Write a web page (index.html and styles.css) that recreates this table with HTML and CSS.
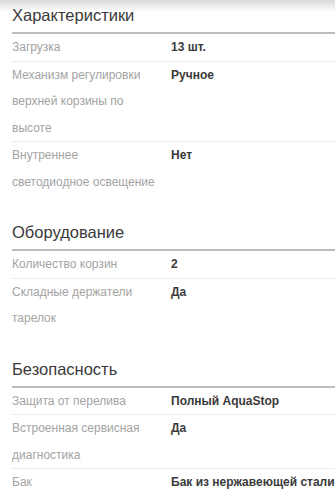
FILE: index.html
```html
<!DOCTYPE html>
<html lang="ru">
<head>
<meta charset="utf-8">
<link rel="stylesheet" href="styles.css">
</head>
<body>
<div class="specs">
  <section class="group">
    <h2 class="group-title">Характеристики</h2>
    <div class="row"><div class="label">Загрузка</div><div class="value">13 шт.</div></div>
    <div class="row"><div class="label">Механизм регулировки верхней корзины по высоте</div><div class="value">Ручное</div></div>
    <div class="row last"><div class="label">Внутреннее светодиодное освещение</div><div class="value">Нет</div></div>
  </section>
  <section class="group">
    <h2 class="group-title">Оборудование</h2>
    <div class="row"><div class="label">Количество корзин</div><div class="value">2</div></div>
    <div class="row last"><div class="label">Складные держатели тарелок</div><div class="value">Да</div></div>
  </section>
  <section class="group">
    <h2 class="group-title">Безопасность</h2>
    <div class="row"><div class="label">Защита от перелива</div><div class="value">Полный AquaStop</div></div>
    <div class="row"><div class="label">Встроенная сервисная диагностика</div><div class="value">Да</div></div>
    <div class="row last"><div class="label">Бак</div><div class="value">Бак из нержавеющей стали</div></div>
  </section>
</div>
</body>
</html>
```
FILE: styles.css
```css
html, body {
  margin: 0;
  padding: 0;
}
body {
  background: linear-gradient(#d9d9d9, #ffffff 12px) no-repeat #fff;
  font-family: "Liberation Sans", Arial, sans-serif;
  color: #333;
}
.specs {
  padding: 5px 0 0 12px;
}
.group + .group {
  margin-top: 27px;
}
.group-title {
  margin: 0;
  font-size: 16.5px;
  font-weight: normal;
  line-height: 20px;
  color: #3a3a3a;
  padding-bottom: 7px;
  border-bottom: 2px solid #bcbcbc;
}
.row {
  display: flex;
  font-size: 12px;
  line-height: 26.5px;
  border-bottom: 1px solid #ececec;
}
.row.last {
  border-bottom: none;
}
.label {
  width: 159px;
  flex: none;
  color: #a3a3a3;
  padding-right: 14px;
  box-sizing: border-box;
}
.value {
  font-weight: bold;
  color: #3a3a3a;
}
```
